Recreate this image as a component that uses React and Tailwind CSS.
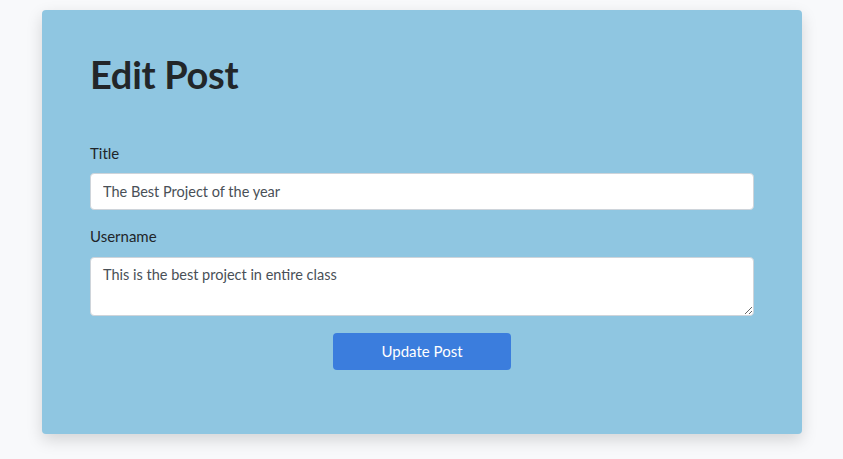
import React from "react";

export default function App() {
  return (
    <div className="min-h-[459px] bg-[#f8f9fb] pl-[42px] pr-[41px] pt-[10px] pb-[25px] font-['Lato',sans-serif]">
      <div className="bg-[#8fc6e1] rounded-[4px] shadow-[0_6px_16px_rgba(0,0,0,0.15)] px-[48px] pt-[42px] pb-[64px]">
        <h1 className="text-[38px] font-bold text-[#222629] leading-[1.2] tracking-[-0.3px]">Edit Post</h1>

        <form className="mt-[44px]" onSubmit={e => e.preventDefault()}>
          <label className="block text-[15px] text-[#212529] mb-[9px]">Title</label>
          <input
            type="text"
            defaultValue="The Best Project of the year"
            className="block w-full h-[37px] bg-white border border-[#ced4da] rounded-[4px] px-[12px] text-[14.5px] text-[#495057] outline-none"
          />

          <label className="block text-[15px] text-[#212529] mt-[15px] mb-[9px]">Username</label>
          <textarea
            defaultValue="This is the best project in entire class"
            className="block w-full h-[59px] bg-white border border-[#ced4da] rounded-[4px] px-[12px] py-[6px] text-[14.5px] text-[#495057] outline-none"
          />

          <div className="flex justify-center mt-[17px]">
            <button className="w-[178px] h-[37px] bg-[#3b7ddd] rounded-[4px] text-white text-[15px]">
              Update Post
            </button>
          </div>
        </form>
      </div>
    </div>
  );
}
